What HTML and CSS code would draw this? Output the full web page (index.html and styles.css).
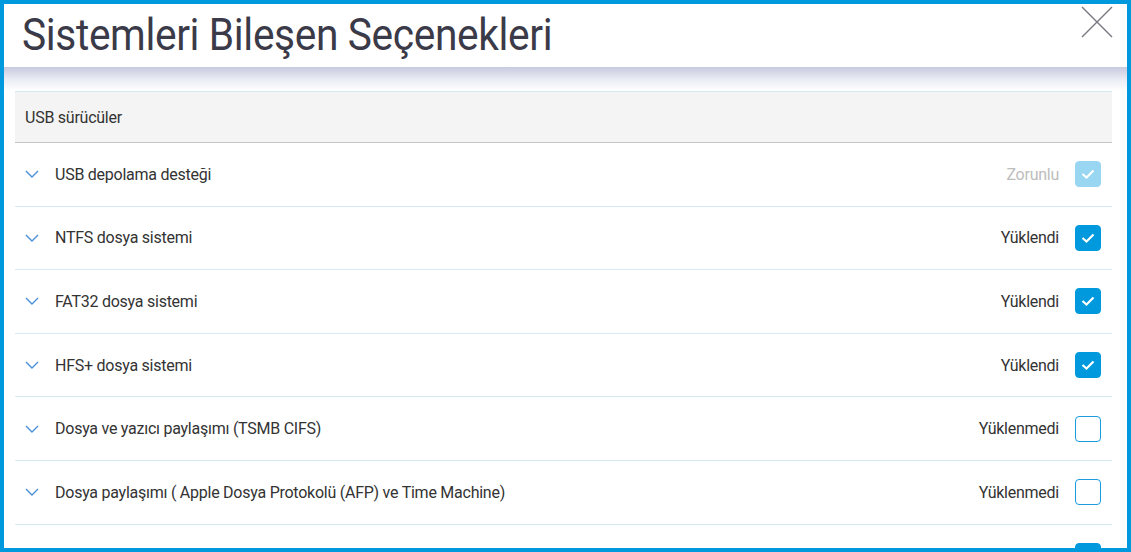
FILE: index.html
```html
<!DOCTYPE html>
<html lang="tr">
<head>
<meta charset="utf-8">
<link rel="stylesheet" href="styles.css">
</head>
<body>
<div class="frame">
  <header class="header">
    <h1 class="title"><span class="title-text">Sistemleri Bileşen Seçenekleri</span></h1>
    <button class="close" aria-label="Kapat">
      <svg width="32" height="32" viewBox="0 0 32 32"><path d="M1 1L31 31M31 1L1 31" stroke="#77777f" stroke-width="1.4" fill="none"/></svg>
    </button>
  </header>
  <div class="shade"></div>
  <div class="panel">
    <div class="section">USB sürücüler</div>
    <div class="row">
      <svg class="chev" width="14" height="8" viewBox="0 0 14 8"><path d="M1 1L7 7L13 1" stroke="#4a8fd6" stroke-width="1.4" fill="none"/></svg>
      <span class="label">USB depolama desteği</span>
      <span class="status muted">Zorunlu</span>
      <span class="box on disabled"><svg width="14" height="10" viewBox="0 0 14 10"><path d="M1.5 5L5.5 8.5L12.5 1.5" stroke="#fff" stroke-width="2.2" fill="none"/></svg></span>
    </div>
    <div class="row">
      <svg class="chev" width="14" height="8" viewBox="0 0 14 8"><path d="M1 1L7 7L13 1" stroke="#4a8fd6" stroke-width="1.4" fill="none"/></svg>
      <span class="label">NTFS dosya sistemi</span>
      <span class="status">Yüklendi</span>
      <span class="box on"><svg width="14" height="10" viewBox="0 0 14 10"><path d="M1.5 5L5.5 8.5L12.5 1.5" stroke="#fff" stroke-width="2.2" fill="none"/></svg></span>
    </div>
    <div class="row">
      <svg class="chev" width="14" height="8" viewBox="0 0 14 8"><path d="M1 1L7 7L13 1" stroke="#4a8fd6" stroke-width="1.4" fill="none"/></svg>
      <span class="label">FAT32 dosya sistemi</span>
      <span class="status">Yüklendi</span>
      <span class="box on"><svg width="14" height="10" viewBox="0 0 14 10"><path d="M1.5 5L5.5 8.5L12.5 1.5" stroke="#fff" stroke-width="2.2" fill="none"/></svg></span>
    </div>
    <div class="row">
      <svg class="chev" width="14" height="8" viewBox="0 0 14 8"><path d="M1 1L7 7L13 1" stroke="#4a8fd6" stroke-width="1.4" fill="none"/></svg>
      <span class="label">HFS+ dosya sistemi</span>
      <span class="status">Yüklendi</span>
      <span class="box on"><svg width="14" height="10" viewBox="0 0 14 10"><path d="M1.5 5L5.5 8.5L12.5 1.5" stroke="#fff" stroke-width="2.2" fill="none"/></svg></span>
    </div>
    <div class="row">
      <svg class="chev" width="14" height="8" viewBox="0 0 14 8"><path d="M1 1L7 7L13 1" stroke="#4a8fd6" stroke-width="1.4" fill="none"/></svg>
      <span class="label">Dosya ve yazıcı paylaşımı (TSMB CIFS)</span>
      <span class="status">Yüklenmedi</span>
      <span class="box"></span>
    </div>
    <div class="row">
      <svg class="chev" width="14" height="8" viewBox="0 0 14 8"><path d="M1 1L7 7L13 1" stroke="#4a8fd6" stroke-width="1.4" fill="none"/></svg>
      <span class="label">Dosya paylaşımı ( Apple Dosya Protokolü (AFP) ve Time Machine)</span>
      <span class="status">Yüklenmedi</span>
      <span class="box"></span>
    </div>
    <div class="row">
      <span class="label"></span>
      <span class="box on"><svg width="14" height="10" viewBox="0 0 14 10"><path d="M1.5 5L5.5 8.5L12.5 1.5" stroke="#fff" stroke-width="2.2" fill="none"/></svg></span>
    </div>
  </div>
</div>
</body>
</html>
```
FILE: styles.css
```css
html, body {
  margin: 0;
  padding: 0;
  width: 1131px;
  height: 552px;
  overflow: hidden;
  background: #0099dd;
}
.frame {
  box-sizing: border-box;
  width: 1131px;
  height: 552px;
  border: 4px solid #0099dd;
  background: #fff;
  overflow: hidden;
  font-family: Roboto, "Liberation Sans", sans-serif;
  color: #333;
}
.header {
  height: 63px;
  display: flex;
  align-items: flex-start;
  justify-content: space-between;
  background: #fff;
}
.title {
  margin: 0;
  padding: 5px 0 0 18px;
  font-weight: 400;
  font-size: 44px;
  line-height: 52px;
  color: #3b3a48;
  letter-spacing: -0.4px;
}
.title-text {
  display: inline-block;
  transform: scaleX(0.925);
  transform-origin: left center;
}
.close {
  border: 0;
  background: none;
  padding: 0;
  margin: 2px 14px 0 0;
  width: 32px;
  height: 32px;
}
.close svg { display: block; }
.shade {
  height: 24px;
  background: linear-gradient(#c7c9df, #eceef6 55%, #fff);
}
.panel {
  margin: 0 15px 0 11px;
}
.section {
  height: 50px;
  border-top: 1px solid #d5eaf4;
  border-bottom: 1px solid #c6c6c6;
  background: #f4f4f4;
  padding-left: 10px;
  display: flex;
  align-items: center;
  font-size: 16px;
  letter-spacing: -0.25px;
}
.row {
  height: 62.6px;
  border-bottom: 1px solid #d6eaf5;
  display: flex;
  align-items: center;
  font-size: 16px;
  letter-spacing: -0.25px;
}
.chev {
  margin-left: 10px;
  margin-right: 16px;
  flex: none;
}
.label { flex: 1; }
.status { margin-right: 16px; }
.status.muted { color: #bdbdbd; }
.box {
  box-sizing: border-box;
  width: 26px;
  height: 26px;
  border-radius: 4px;
  border: 1.5px solid #1b9be0;
  margin-right: 11px;
  display: flex;
  align-items: center;
  justify-content: center;
  background: #fff;
}
.box.on {
  background: #0099dd;
  border-color: #0099dd;
}
.box.on.disabled {
  background: #99d6f1;
  border-color: #99d6f1;
}
```
